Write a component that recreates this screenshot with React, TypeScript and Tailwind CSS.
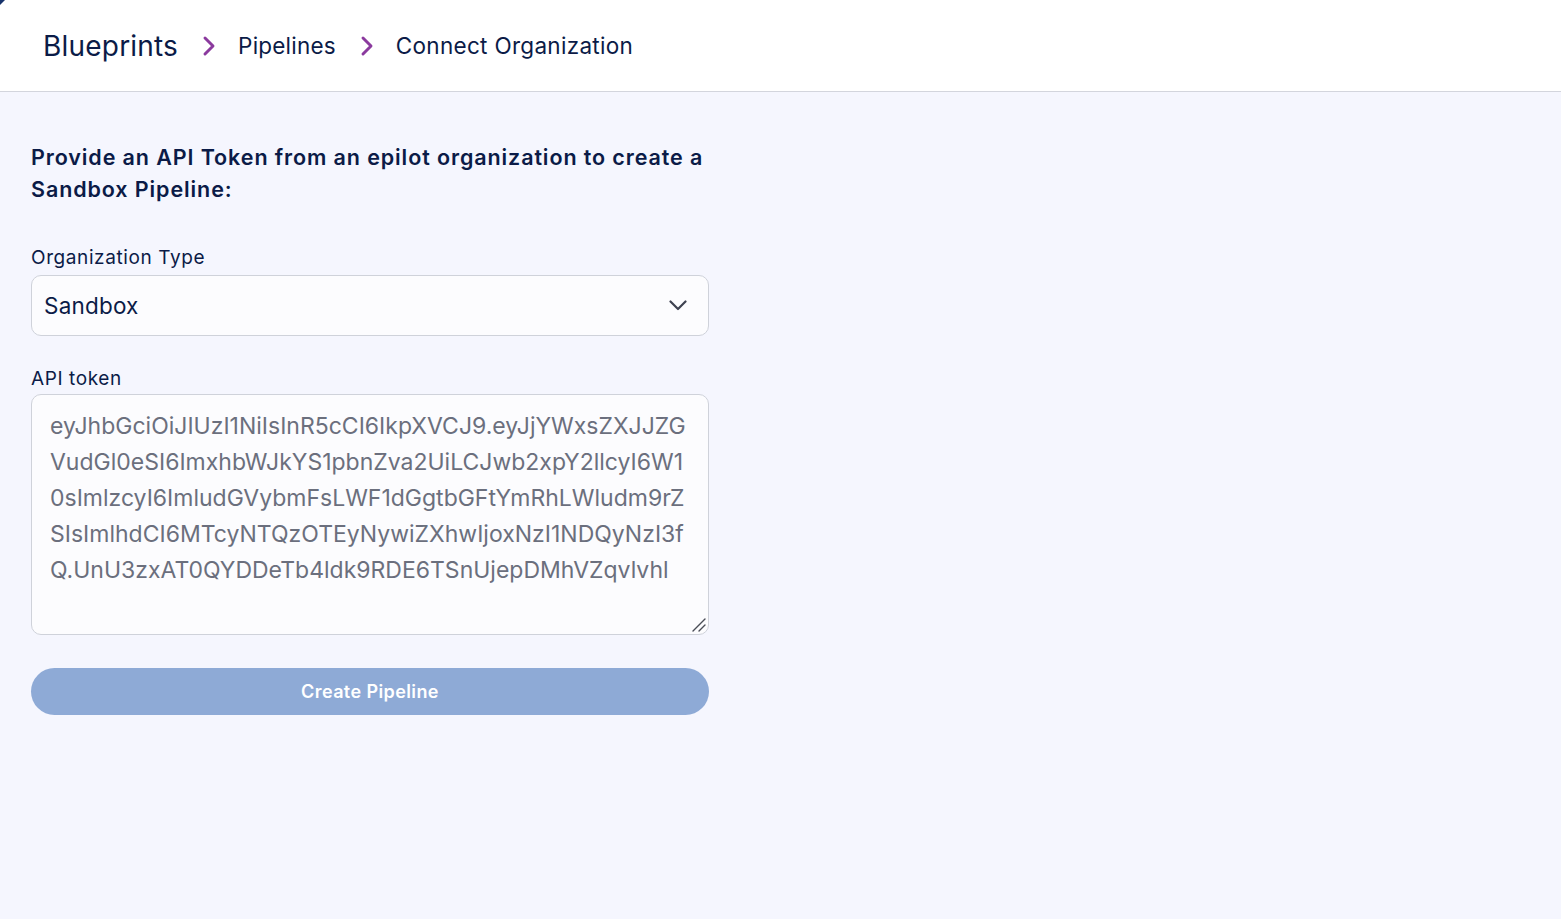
import { ChevronRight } from "lucide-react";

const tokenLines = [
  "eyJhbGciOiJIUzI1NiIsInR5cCI6IkpXVCJ9.eyJjYWxsZXJJZG",
  "VudGl0eSI6ImxhbWJkYS1pbnZva2UiLCJwb2xpY2llcyI6W1",
  "0sImlzcyI6ImludGVybmFsLWF1dGgtbGFtYmRhLWludm9rZ",
  "SIsImlhdCI6MTcyNTQzOTEyNywiZXhwIjoxNzI1NDQyNzI3f",
  "Q.UnU3zxAT0QYDDeTb4ldk9RDE6TSnUjepDMhVZqvlvhl",
];

const Separator = () => (
  <ChevronRight className="ml-[15px] mr-[13px] text-[#8b3a9e]" size={32} strokeWidth={2.2} />
);

const App = () => {
  return (
    <div
      className="relative min-h-[919px] bg-[#f5f6fe] text-[#0b1b47]"
      style={{ fontFamily: "Inter, 'Noto Sans', sans-serif" }}
    >
      <svg className="absolute left-0 top-0" width="6" height="6" viewBox="0 0 6 6">
        <path d="M0 0 H5 L0 5 Z" fill="#17336b" />
      </svg>

      <header className="flex h-[92px] items-center border-b border-[#d3d5dd] bg-white pl-[43px]">
        <nav className="flex items-center">
          <span className="text-[28px] tracking-[0.2px]">Blueprints</span>
          <Separator />
          <span className="text-[22.5px] tracking-[0.2px]">Pipelines</span>
          <Separator />
          <span className="text-[22.5px] tracking-[0.3px]">Connect Organization</span>
        </nav>
      </header>

      <main className="w-[709px] pl-[31px] pt-[49px]">
        <h1 className="text-[21.5px] font-semibold leading-[32px] tracking-[0.9px]">
          Provide an API Token from an epilot organization to create a Sandbox Pipeline:
        </h1>

        <label className="mt-[39px] block text-[19px] leading-[28px] tracking-[0.6px]">
          Organization Type
        </label>
        <div className="mt-[3px] flex h-[61px] items-center justify-between rounded-[10px] border border-[#cfd2da] bg-[#fcfcfe] pl-[12px] pr-[21px]">
          <span className="text-[22.5px] tracking-[0.2px]">Sandbox</span>
          <svg width="18" height="11" viewBox="0 0 18 11" fill="none">
            <polyline
              points="1.5,1.5 9,9 16.5,1.5"
              stroke="#3d4150"
              strokeWidth="2.2"
              strokeLinecap="round"
              strokeLinejoin="round"
            />
          </svg>
        </div>

        <label className="mt-[29px] block text-[19px] leading-[28px] tracking-[0.6px]">API token</label>
        <div className="relative mt-[1px]">
          <textarea
            readOnly
            value={tokenLines.join("\n")}
            className="block h-[241px] w-full resize-none rounded-[10px] border border-[#cfd2da] bg-[#fcfcfe] py-[13px] pl-[18px] pr-[8px] text-[23px] leading-[36px] text-[#6b6f7d] outline-none [word-break:break-all]"
          />
          <svg className="pointer-events-none absolute bottom-[2px] right-[2px]" width="16" height="16" viewBox="0 0 16 16">
            <path d="M2 14 L14 2 M8 14 L14 8" stroke="#4a4d57" strokeWidth="1.4" strokeLinecap="round" />
          </svg>
        </div>

        <button
          type="button"
          className="mt-[33px] h-[47px] w-full rounded-full bg-[#8eaad6] text-[18px] font-semibold tracking-[0.4px] text-white"
        >
          Create Pipeline
        </button>
      </main>
    </div>
  );
};

export default App;
